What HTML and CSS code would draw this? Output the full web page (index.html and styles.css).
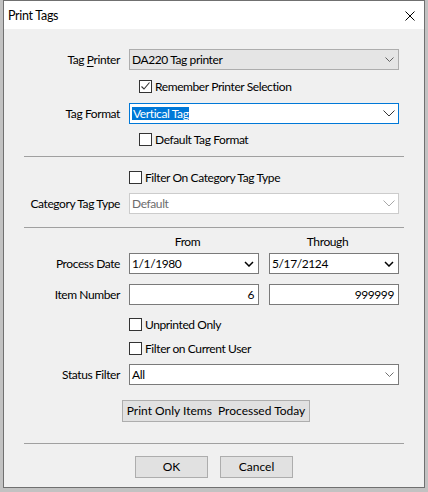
FILE: index.html
```html
<!DOCTYPE html>
<html>
<head>
<meta charset="utf-8">
<title>Print Tags</title>
<link rel="stylesheet" href="styles.css">
</head>
<body>
<div class="window">
  <div class="titlebar">
    <span class="title">Print Tags</span>
    <svg class="close" width="10" height="10" viewBox="0 0 10 10"><path d="M0.5 0.5 L9.5 9.5 M9.5 0.5 L0.5 9.5" stroke="#000" stroke-width="1" fill="none"/></svg>
  </div>
  <div class="content">
    <div class="row m20">
      <span class="lbl">Tag <u>P</u>rinter</span>
      <div class="combo combo-ro"><span class="val">DA220 Tag printer</span><svg class="chev-sm" width="9" height="5" viewBox="0 0 9 5"><path d="M0.5 0.5 L4.5 4.5 L8.5 0.5" fill="none" stroke="#606060"/></svg></div>
    </div>
    <div class="cbrow indent m10">
      <span class="cb"><svg width="11" height="11" viewBox="0 0 11 11"><path d="M1.5 5.5 L4 8 L9.5 1.5" fill="none" stroke="#333" stroke-width="1.1"/></svg></span>
      <span>Remember Printer Selection</span>
    </div>
    <div class="row m10">
      <span class="lbl">Tag Format</span>
      <div class="combo combo-focus"><span class="val"><span class="sel">Vertical Tag</span></span><svg class="chev-lg" width="12" height="7" viewBox="0 0 12 7"><path d="M0.5 0.5 L6 6 L11.5 0.5" fill="none" stroke="#333"/></svg></div>
    </div>
    <div class="cbrow indent m9">
      <span class="cb"></span>
      <span>Default Tag Format</span>
    </div>
    <div class="sep m10"></div>
    <div class="cbrow m14">
      <span class="cb"></span>
      <span>Filter On Category Tag Type</span>
    </div>
    <div class="row m9">
      <span class="lbl">Category Tag Type</span>
      <div class="combo combo-dis"><span class="val">Default</span><svg class="chev-lg" width="12" height="7" viewBox="0 0 12 7"><path d="M0.5 0.5 L6 6 L11.5 0.5" fill="none" stroke="#a8a8a8"/></svg></div>
    </div>
    <div class="sep m13"></div>
    <div class="row hdr m7">
      <span class="lbl"></span>
      <div class="pair">
        <span class="colhead">From</span>
        <span class="colhead">Through</span>
      </div>
    </div>
    <div class="row m4">
      <span class="lbl">Process Date</span>
      <div class="pair">
        <div class="combo combo-dt"><span class="val">1/1/1980</span><svg class="chev-dt" width="10" height="6" viewBox="0 0 10 6"><path d="M1 1 L5 5 L9 1" fill="none" stroke="#000" stroke-width="1.5"/></svg></div>
        <div class="combo combo-dt"><span class="val">5/17/2124</span><svg class="chev-dt" width="10" height="6" viewBox="0 0 10 6"><path d="M1 1 L5 5 L9 1" fill="none" stroke="#000" stroke-width="1.5"/></svg></div>
      </div>
    </div>
    <div class="row m10">
      <span class="lbl">Item Number</span>
      <div class="pair">
        <div class="textbox">6</div>
        <div class="textbox">999999</div>
      </div>
    </div>
    <div class="cbrow m13">
      <span class="cb"></span>
      <span>Unprinted Only</span>
    </div>
    <div class="cbrow m11">
      <span class="cb"></span>
      <span>Filter on Current User</span>
    </div>
    <div class="row m9">
      <span class="lbl">Status Filter</span>
      <div class="combo combo-plain"><span class="val">All</span><svg class="chev-sm" width="9" height="5" viewBox="0 0 9 5"><path d="M0.5 0.5 L4.5 4.5 L8.5 0.5" fill="none" stroke="#707070"/></svg></div>
    </div>
    <div class="btnrow m15">
      <button class="btn btn-today">Print Only Items  Processed Today</button>
    </div>
    <div class="sep m21"></div>
    <div class="btnrow m12">
      <button class="btn btn-ok">OK</button>
      <button class="btn btn-cancel">Cancel</button>
    </div>
  </div>
</div>
</body>
</html>
```
FILE: styles.css
```css
* { box-sizing: border-box; }
html, body { margin: 0; padding: 0; }
body {
  background: #c2c2c2;
  font-family: Lato, "Liberation Sans", sans-serif;
  font-size: 12px;
  letter-spacing: -0.4px;
  color: #000;
  width: 428px;
  height: 492px;
  overflow: hidden;
}
.window {
  margin-left: 3px;
  width: 422px;
  height: 488px;
  border: 1px solid #707070;
  background: #f0f0f0;
  display: flex;
  flex-direction: column;
}
.titlebar {
  height: 28px;
  flex: none;
  background: #fff;
  display: flex;
  align-items: center;
  justify-content: space-between;
  padding: 0 9px 0 4px;
}
.title { font-size: 12.5px; line-height: 14px; padding-top: 2px; letter-spacing: -0.3px; }
.close { display: block; margin-top: 1px; }
.content { display: flex; flex-direction: column; }

.m4 { margin-top: 4px; }
.m7 { margin-top: 7px; }
.m9 { margin-top: 9px; }
.m10 { margin-top: 10px; }
.m11 { margin-top: 11px; }
.m12 { margin-top: 12px; }
.m13 { margin-top: 13px; }
.m14 { margin-top: 14px; }
.m15 { margin-top: 15px; }
.m20 { margin-top: 20px; }
.m21 { margin-top: 21px; }

.row {
  display: grid;
  grid-template-columns: 116px 270px;
  column-gap: 9px;
  align-items: center;
  height: 21px;
}
.row.hdr { height: 14px; }
.lbl { justify-self: end; white-space: nowrap; line-height: 14px; }
.lbl u { text-decoration-thickness: 1px; text-underline-offset: 2px; }

.pair {
  display: grid;
  grid-template-columns: 130px 130px;
  column-gap: 10px;
  height: 100%;
}
.colhead { text-align: center; padding-right: 13px; line-height: 14px; }

.combo {
  height: 21px;
  display: flex;
  align-items: center;
  justify-content: space-between;
  padding: 0 4px 0 2px;
  border: 1px solid #7a7a7a;
  background: #fff;
  white-space: nowrap;
}
.val { line-height: 14px; }
.combo-ro { background: #e5e5e5; border-color: #adadad; }
.combo-focus { border-color: #0078d7; padding-right: 3px; }
.combo-dis { border-color: #cccccc; color: #6d6d6d; padding-right: 3px; }
.combo-dt { padding-right: 4px; }
.combo-plain { border-color: #7a7a7a; }
.sel { background: #0078d7; color: #fff; padding: 0 1px 0 1px; display: inline-block; line-height: 13px; }
.chev-sm, .chev-lg, .chev-dt { display: block; flex: none; }

.textbox {
  height: 21px;
  border: 1px solid #7a7a7a;
  background: #fff;
  text-align: right;
  padding-right: 4px;
  line-height: 19px;
}

.cbrow {
  display: flex;
  align-items: center;
  gap: 3px;
  height: 13px;
  padding-left: 125px;
  white-space: nowrap;
}
.cbrow.indent { padding-left: 135px; }
.cb {
  width: 13px;
  height: 13px;
  flex: none;
  border: 1px solid #333;
  background: #fff;
  display: block;
}
.cb svg { display: block; }

.sep {
  height: 1px;
  width: 380px;
  margin-left: 20px;
  background: #a0a0a0;
  flex: none;
}

.btnrow { display: flex; height: 22px; }
.btn {
  font: inherit;
  color: #000;
  height: 22px;
  border: 1px solid #adadad;
  background: #e1e1e1;
  padding: 0;
  margin: 0;
  white-space: pre;
  line-height: 20px;
}
.btn-today { width: 188px; margin-left: 118px; }
.btn-ok { width: 73px; margin-left: 131px; }
.btn-cancel { width: 73px; margin-left: 12px; }
```
